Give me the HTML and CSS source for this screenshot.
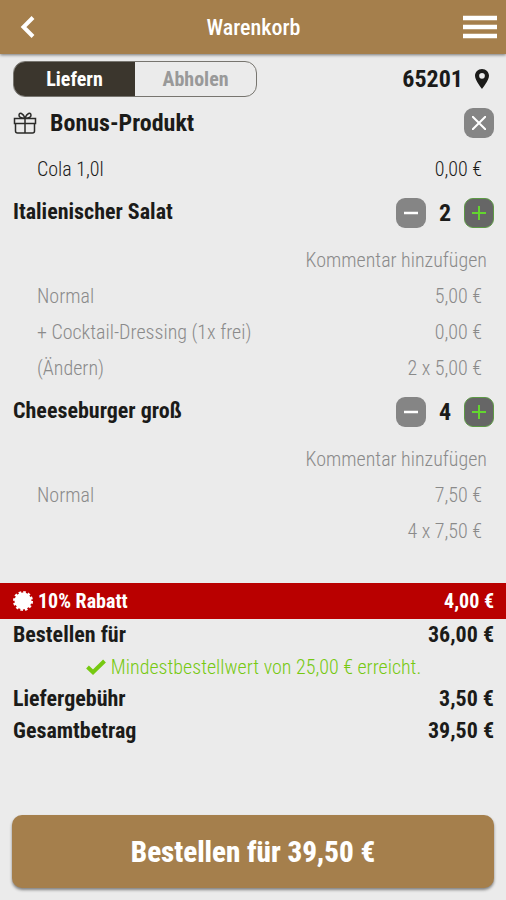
FILE: index.html
```
<!DOCTYPE html>
<html lang="de">
<head>
  <meta charset="UTF-8" />
  <meta name="viewport" content="width=device-width, initial-scale=1.0" />
  <title>Warenkorb</title>
  <link rel="stylesheet" href="styles.css">
</head>
<body>
  <header class="header">
    <button class="icon-btn" aria-label="Zurück">
      <svg width="16" height="24" viewBox="0 0 16 24"><path d="M13 2.500 3.500 12 13 21.500" fill="none" stroke="#fff" stroke-width="4"/></svg>
    </button>
    <h1 class="title">Warenkorb</h1>
    <button class="icon-btn" aria-label="Menü">
      <svg width="34" height="24" viewBox="0 0 34 24"><path d="M0 3h34M0 12h34M0 21h34" stroke="#fff" stroke-width="4.500"/></svg>
    </button>
  </header>

  <main class="cart">
    <div class="row">
      <div class="toggle">
        <button class="toggle-btn active">Liefern</button>
        <button class="toggle-btn">Abholen</button>
      </div>
      <button class="location">
        65201
        <svg width="14" height="20" viewBox="0 0 14 20"><path fill-rule="evenodd" d="M7 0C3 0 0 3 0 6.800 0 11.500 7 20 7 20s7-8.500 7-13.200C14 3 11 0 7 0Zm0 4a2.800 2.800 0 1 1 0 5.700A2.800 2.800 0 0 1 7 4Z" fill="#1b1b19"/></svg>
      </button>
    </div>

    <section class="item bonus">
      <div class="row">
        <h2 class="bonus-title">
          <svg width="24" height="22" viewBox="0 0 24 22" fill="none" stroke="#2b2b29" stroke-width="1.500"><path d="M1.500 6.500h21v5h-21zM2.500 11.500v7.500q0 2 2 2h15q2 0 2-2v-7.500M12 6.500v14.500M12 6C10 1 6.500 0 6 3c-.2 2 2 3.300 6 3.300C16 6.300 18.200 5 18 3c-.5-3-4-2-6 3Z"/></svg>
          Bonus-Produkt
        </h2>
        <button class="square" aria-label="Entfernen">
          <svg width="14" height="14" viewBox="0 0 14 14"><path d="M0 0l14 14M14 0 0 14" stroke="#fff" stroke-width="2"/></svg>
        </button>
      </div>
      <div class="line dark first"><span>Cola 1,0l</span><span>0,00 €</span></div>
    </section>

    <section class="item">
      <div class="row">
        <h2 class="name">Italienischer Salat</h2>
        <div class="stepper">
          <button class="square" aria-label="Weniger">
            <svg width="14" height="14" viewBox="0 0 14 14"><path d="M0 7h14" stroke="#fff" stroke-width="2.500"/></svg>
          </button>
          <span class="count">2</span>
          <button class="square plus" aria-label="Mehr">
            <svg width="14" height="14" viewBox="0 0 14 14"><path d="M0 7h14M7 0v14" stroke="#63d62f" stroke-width="2"/></svg>
          </button>
        </div>
      </div>
      <button class="comment">Kommentar hinzufügen</button>
      <div class="line"><span>Normal</span><span>5,00 €</span></div>
      <div class="line"><span>+ Cocktail-Dressing (1x frei)</span><span>0,00 €</span></div>
      <div class="line"><a class="change" href="#">(Ändern)</a><span>2 x 5,00 €</span></div>
    </section>

    <section class="item">
      <div class="row">
        <h2 class="name">Cheeseburger groß</h2>
        <div class="stepper">
          <button class="square" aria-label="Weniger">
            <svg width="14" height="14" viewBox="0 0 14 14"><path d="M0 7h14" stroke="#fff" stroke-width="2.500"/></svg>
          </button>
          <span class="count">4</span>
          <button class="square plus" aria-label="Mehr">
            <svg width="14" height="14" viewBox="0 0 14 14"><path d="M0 7h14M7 0v14" stroke="#63d62f" stroke-width="2"/></svg>
          </button>
        </div>
      </div>
      <button class="comment">Kommentar hinzufügen</button>
      <div class="line"><span>Normal</span><span>7,50 €</span></div>
      <div class="line"><span></span><span>4 x 7,50 €</span></div>
    </section>
  </main>

  <div class="discount">
    <span class="discount-label">
      <svg width="20" height="20" viewBox="0 0 20 20"><circle cx="10" cy="10" r="8.500" fill="#fff"/><circle cx="10" cy="10" r="8.500" fill="none" stroke="#fff" stroke-width="3" stroke-dasharray="2.500 1.950"/></svg>
      10% Rabatt
    </span>
    <span>4,00 €</span>
  </div>

  <section class="summary">
    <div class="sum"><span>Bestellen für</span><span>36,00 €</span></div>
    <p class="minimum">
      <svg width="20" height="16" viewBox="0 0 20 16"><path d="M1.500 8 7 13.200 18.500 2" fill="none" stroke="#76c911" stroke-width="4"/></svg>
      Mindestbestellwert von 25,00 € erreicht.
    </p>
    <div class="sum"><span>Liefergebühr</span><span>3,50 €</span></div>
    <div class="sum"><span>Gesamtbetrag</span><span>39,50 €</span></div>
  </section>

  <button class="order">Bestellen für 39,50 €</button>
</body>
</html>
```
FILE: styles.css
```
* {
  box-sizing: border-box;
}

body {
  margin: 0;
  min-height: 100vh;
  display: flex;
  flex-direction: column;
  background: #ebebeb;
  color: #1b1b19;
  font-family: "Roboto Condensed", "Liberation Sans Narrow", Roboto, sans-serif;
  font-size: 20px;
}

h1, h2, p {
  margin: 0;
}

button {
  padding: 0;
  border: none;
  background: none;
  color: inherit;
  font: inherit;
  cursor: pointer;
}

svg {
  display: block;
  flex-shrink: 0;
}

.header {
  height: 54px;
  padding: 0 9px 0 20px;
  display: grid;
  grid-template-columns: 24px 1fr 34px;
  align-items: center;
  background: #a57f4c;
  color: #fff;
  box-shadow: 0 1px 3px rgba(0, 0, 0, 0.5);
}

.title {
  font-size: 22px;
  font-weight: 500;
  text-align: center;
}

.cart {
  padding: 7px 12px 34px 13px;
}

.row {
  display: flex;
  justify-content: space-between;
  align-items: center;
  min-height: 36px;
}

.toggle {
  display: flex;
  width: 244px;
  height: 36px;
  border: 1px solid #77756f;
  border-radius: 12px;
  overflow: hidden;
}

.toggle-btn {
  flex: 1;
  color: #999;
  font-weight: bold;
}

.toggle-btn.active {
  background: #3b362d;
  color: #fff;
}

.location {
  display: flex;
  align-items: center;
  gap: 12px;
  padding-right: 5px;
  font-size: 24px;
  font-weight: bold;
}

.item {
  margin-top: 8px;
}

.bonus-title {
  display: flex;
  align-items: center;
  gap: 13px;
  font-size: 24px;
}

.name {
  padding-bottom: 3px;
  font-size: 22px;
}

.square {
  width: 30px;
  height: 30px;
  display: flex;
  align-items: center;
  justify-content: center;
  background: #858585;
  border-radius: 9px;
}

.square.plus {
  background: #666;
  border: 1px solid #5d9a45;
}

.stepper {
  display: flex;
  align-items: center;
}

.count {
  width: 38px;
  font-size: 24px;
  font-weight: bold;
  text-align: center;
}

.comment {
  display: block;
  height: 36px;
  margin: 11px 7px 0 auto;
  color: #8a8a8a;
  font-weight: 350;
}

.line {
  display: flex;
  justify-content: space-between;
  padding: 0 12px 0 24px;
  line-height: 36px;
  color: #8a8a8a;
  font-weight: 350;
}

.line.dark {
  color: #1b1b19;
}

.line.first {
  margin-top: 10px;
}

.change {
  color: inherit;
  text-decoration: none;
}

.discount {
  display: flex;
  justify-content: space-between;
  align-items: center;
  height: 36px;
  padding: 0 12px 0 13px;
  background: #b90000;
  color: #fff;
  font-weight: bold;
}

.discount-label {
  display: flex;
  align-items: center;
  gap: 5px;
}

.summary {
  padding: 0 12px 0 13px;
  line-height: 32px;
}

.sum {
  display: flex;
  justify-content: space-between;
  font-size: 22px;
  font-weight: bold;
}

.minimum {
  display: flex;
  align-items: center;
  justify-content: center;
  gap: 5px;
  color: #76c911;
  font-weight: 350;
}

.order {
  height: 73px;
  margin: auto 12px 12px;
  border-radius: 10px;
  background: #a57f4c;
  color: #fff;
  font-size: 29px;
  font-weight: 800;
  box-shadow: 0 2px 3px rgba(0, 0, 0, 0.45);
}
```
